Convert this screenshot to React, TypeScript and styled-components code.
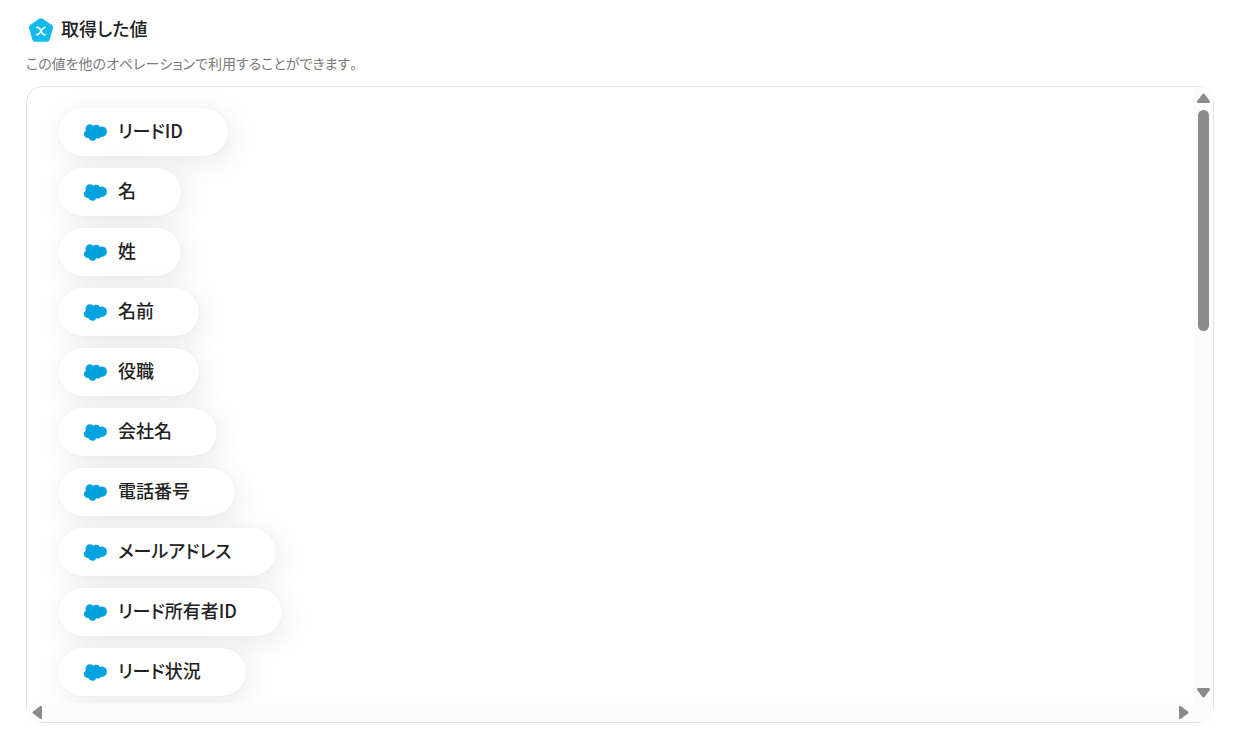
import React from "react";
import styled, { createGlobalStyle } from "styled-components";

const GlobalStyle = createGlobalStyle`
  *, *::before, *::after { box-sizing: border-box; }
  body {
    margin: 0;
    background: #fff;
    color: #222;
    font-family: "Noto Sans CJK JP", "Noto Sans", sans-serif;
    font-feature-settings: "palt";
  }
`;

const Page = styled.main`
  display: flex;
  flex-direction: column;
  height: 100vh;
  padding: 14px 31px 20px 26px;
`;

const Header = styled.header`
  display: flex;
  align-items: flex-end;
  gap: 7px;
  height: 29px;
  padding-left: 2px;
`;

const Title = styled.h1`
  align-self: flex-start;
  margin: 0;
  font-size: 18px;
  font-weight: 500;
  line-height: 28px;
`;

const Description = styled.p`
  margin: 9px 0 12px;
  color: #7a7a7a;
  font-size: 14px;
  font-kerning: none;
  line-height: 22px;
`;

const Panel = styled.section`
  display: grid;
  grid-template-columns: minmax(0, 1fr) 19px;
  grid-template-rows: minmax(0, 1fr) 19px;
  flex: 1;
  min-height: 0;
  border: 1px solid #e3e3e3;
  border-radius: 16px;
`;

const ValueList = styled.ul`
  display: flex;
  flex-direction: column;
  align-items: flex-start;
  gap: 12px;
  margin: 0;
  padding: 21px 31px 6px;
  overflow: auto;
  scrollbar-width: none;
  list-style: none;
  border-top-left-radius: 15px;
`;

const ValueChip = styled.li`
  display: flex;
  flex: none;
  align-items: center;
  gap: 11px;
  height: 48px;
  padding: 0 45px 0 26px;
  border-radius: 24px;
  background: #fff;
  box-shadow: 0 0 1px rgba(0, 0, 0, 0.11), 4px 6px 30px rgba(0, 0, 0, 0.09);
`;

const ValueName = styled.span`
  padding-bottom: 4px;
  font-size: 18px;
  font-weight: 500;
  line-height: 28px;
  white-space: nowrap;
`;

const Track = styled.div<{ $vertical?: boolean }>`
  display: flex;
  flex-direction: ${(p) => (p.$vertical ? "column" : "row")};
  align-items: center;
  justify-content: space-between;
  padding: ${(p) => (p.$vertical ? "6px 0 5px" : "0 5px")};
  background: #fcfcfc;
`;

const VerticalRun = styled.div`
  flex: 1;
  width: 11px;
  padding: 7px 0;
`;

const Thumb = styled.div`
  height: 38.7%;
  border-radius: 6px;
  background: #8b8b8b;
`;

const Corner = styled.div`
  background: #fcfcfc;
`;

const Svg = styled.svg`
  display: block;
  flex: none;
`;

function VariableIcon() {
  return (
    <Svg width="26" height="26" viewBox="0 0 26 26" aria-hidden="true">
      <path
        d="M11.2 1.8a3 3 0 0 1 3.600 0l9 6.200a3 3 0 0 1 1.100 3.300l-3.200 11.300a3 3 0 0 1-2.900 2.200H7.200a3 3 0 0 1-2.900-2.200L1.100 11.300A3 3 0 0 1 2.200 8z"
        fill="#12b9ec"
      />
      <path
        d="M8.900 10.400c2-.3 2.800.7 4.100 3.700s2.200 3.900 4.200 3.600M17 10.500c-1.600-.3-2.600 1.200-4 3.600s-2.500 3.900-4.200 3.500"
        fill="none"
        stroke="#fff"
        strokeWidth="1.600"
        strokeLinecap="round"
      />
    </Svg>
  );
}

function CloudIcon() {
  return (
    <Svg width="23" height="17" viewBox="0 -3 273 197" preserveAspectRatio="none" aria-hidden="true">
      <path
        d="M113 21.300c8.780-9.140 21-14.800 34.500-14.800 18 0 33.600 10 42 24.900a58 58 0 0 1 23.700-5.100c32.400 0 58.700 26.500 58.700 59.200s-26.300 59.200-58.700 59.200c-3.960 0-7.820-.4-11.600-1.150-7.350 13.100-21.400 22-37.400 22a42.700 42.700 0 0 1-18.800-4.320c-7.450 17.500-24.800 29.800-45 29.800-21.100 0-39-13.300-45.900-32a45.100 45.100 0 0 1-9.340.97c-25.100 0-45.400-20.600-45.400-45.900 0-17 9.140-31.800 22.700-39.800a52.600 52.600 0 0 1-4.350-21c0-29.200 23.700-52.800 52.900-52.800 17.100 0 32.400 8.150 42 20.800"
        fill="#00a1e0"
      />
    </Svg>
  );
}

const arrows = {
  up: "M5.500 1a1.300 1.300 0 0 1 2 0l5.100 6.700c.8 1 .3 2.300-.9 2.300H1.300C.1 10-.4 8.700.4 7.700z",
  down: "M5.500 9a1.300 1.300 0 0 0 2 0l5.100-6.700C13.400 1.300 12.900 0 11.700 0H1.300C.1 0-.4 1.300.4 2.300z",
  left: "M1 5.500a1.300 1.300 0 0 0 0 2l6.700 5.100c1 .8 2.300.3 2.300-.9V1.300C10 .1 8.700-.4 7.700.4z",
  right: "M9 5.500a1.300 1.300 0 0 1 0 2l-6.700 5.100C1.300 13.400 0 12.900 0 11.700V1.300C0 .1 1.300-.4 2.300.4z",
};

function Arrow({ direction }: { direction: keyof typeof arrows }) {
  const upright = direction === "up" || direction === "down";
  const width = upright ? 13 : 10;
  const height = upright ? 10 : 13;
  return (
    <Svg width={width} height={height} viewBox={`0 0 ${width} ${height}`} aria-hidden="true">
      <path d={arrows[direction]} fill="#8b8b8b" />
    </Svg>
  );
}

const values = [
  "リードID",
  "名",
  "姓",
  "名前",
  "役職",
  "会社名",
  "電話番号",
  "メールアドレス",
  "リード所有者ID",
  "リード状況",
];

export default function App() {
  return (
    <>
      <GlobalStyle />
      <Page lang="ja">
        <Header>
          <VariableIcon />
          <Title>取得した値</Title>
        </Header>
        <Description>この値を他のオペレーションで利用することができます。</Description>
        <Panel>
          <ValueList>
            {values.map((value) => (
              <ValueChip key={value}>
                <CloudIcon />
                <ValueName>{value}</ValueName>
              </ValueChip>
            ))}
          </ValueList>
          <Track $vertical>
            <Arrow direction="up" />
            <VerticalRun>
              <Thumb />
            </VerticalRun>
            <Arrow direction="down" />
          </Track>
          <Track>
            <Arrow direction="left" />
            <Arrow direction="right" />
          </Track>
          <Corner />
        </Panel>
      </Page>
    </>
  );
}
